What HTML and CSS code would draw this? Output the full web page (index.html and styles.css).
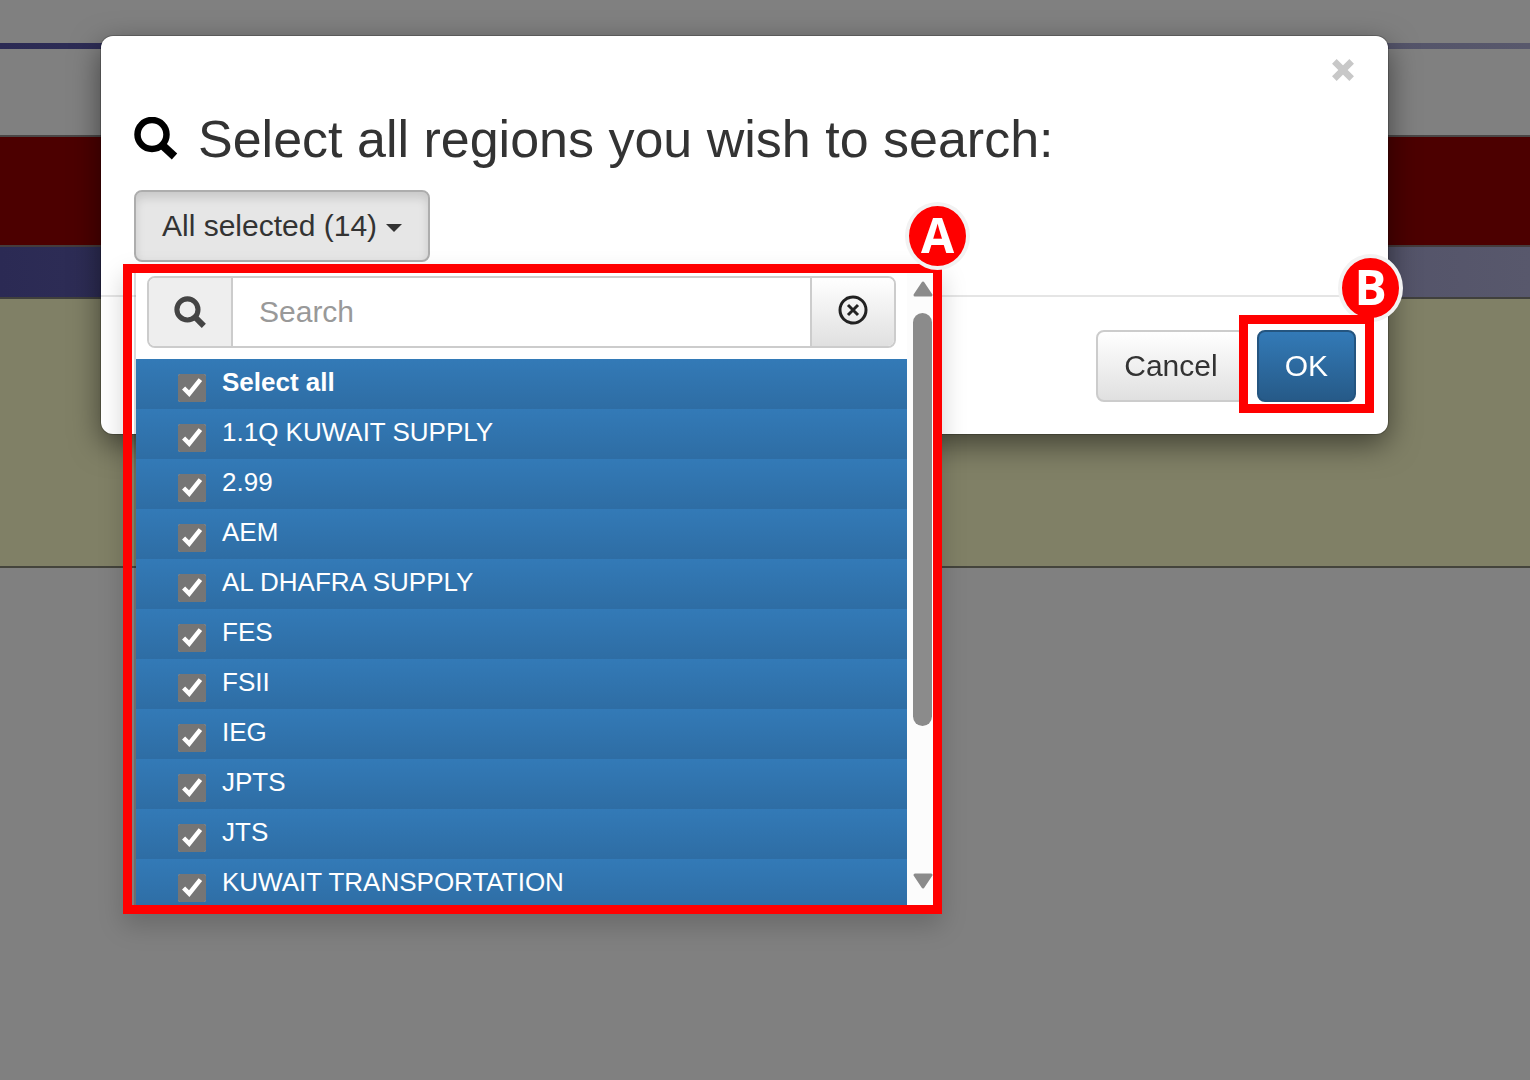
FILE: index.html
```html
<!DOCTYPE html>
<html lang="en">
<head>
    <meta charset="utf-8">
    <meta name="viewport" content="width=device-width, initial-scale=1">
    <title>Select regions</title>
    <link rel="stylesheet" href="styles.css">
</head>
<body>
    <div class="page">
        <div class="page-top"></div>
        <div class="page-line"></div>
        <div class="page-header"></div>
        <div class="page-banner"></div>
        <div class="page-nav"></div>
        <div class="page-notice"></div>
    </div>

    <div class="overlay">
        <div class="modal" role="dialog" aria-labelledby="modal-title">
            <div class="modal-header">
                <button class="close" type="button" aria-label="Close">
                    <svg class="close-icon" viewBox="0 0 24 24" aria-hidden="true">
                        <path d="M4 4l16 16M20 4L4 20" fill="none" stroke="#c8c8c8" stroke-width="6"/>
                    </svg>
                </button>
            </div>
            <div class="modal-body">
                <h1 class="modal-title" id="modal-title">
                    <svg class="title-icon" viewBox="0 0 44 44" aria-hidden="true">
                        <circle cx="18" cy="17.500" r="14.500" fill="none" stroke="#000" stroke-width="6.500"/>
                        <path d="M27.500 27.500l13 12" fill="none" stroke="#000" stroke-width="8"/>
                    </svg>
                    Select all regions you wish to search:
                </h1>
                <div class="btn-group">
                    <button class="btn btn-default btn-open" type="button" aria-expanded="true">All selected (14)<span class="caret"></span></button>
                    <div class="callout callout-menu">
                        <div class="menu">
                            <div class="menu-content">
                                <div class="search-box">
                                    <label class="search-addon" for="search" aria-label="Search">
                                        <svg class="search-icon" viewBox="0 0 44 44" aria-hidden="true">
                                            <circle cx="18.500" cy="18.500" r="14.500" fill="none" stroke="#444" stroke-width="7"/>
                                            <path d="M28 28l13 13" fill="none" stroke="#444" stroke-width="8"/>
                                        </svg>
                                    </label>
                                    <input class="search-input" id="search" type="text" placeholder="Search">
                                    <button class="search-clear" type="button" aria-label="Clear">
                                        <svg class="clear-icon" viewBox="0 0 30 30" aria-hidden="true">
                                            <circle cx="15" cy="15" r="13" fill="none" stroke="#222" stroke-width="3"/>
                                            <path d="M10 10l10 10M20 10L10 20" stroke="#222" stroke-width="3"/>
                                        </svg>
                                    </button>
                                </div>
                                <ul class="regions">
                                    <li><label class="region region-all"><input type="checkbox" checked>Select all</label></li>
                                    <li><label class="region"><input type="checkbox" checked>1.1Q KUWAIT SUPPLY</label></li>
                                    <li><label class="region"><input type="checkbox" checked>2.99</label></li>
                                    <li><label class="region"><input type="checkbox" checked>AEM</label></li>
                                    <li><label class="region"><input type="checkbox" checked>AL DHAFRA SUPPLY</label></li>
                                    <li><label class="region"><input type="checkbox" checked>FES</label></li>
                                    <li><label class="region"><input type="checkbox" checked>FSII</label></li>
                                    <li><label class="region"><input type="checkbox" checked>IEG</label></li>
                                    <li><label class="region"><input type="checkbox" checked>JPTS</label></li>
                                    <li><label class="region"><input type="checkbox" checked>JTS</label></li>
                                    <li><label class="region"><input type="checkbox" checked>KUWAIT TRANSPORTATION</label></li>
                                </ul>
                            </div>
                            <div class="scrollbar" aria-hidden="true">
                                <svg class="scroll-arrow" viewBox="0 0 20 16"><path d="M10 2L18 14H2z" fill="#8b8b8b" stroke="#8b8b8b" stroke-width="3" stroke-linejoin="round"/></svg>
                                <div class="scroll-track"><div class="scroll-thumb"></div></div>
                                <svg class="scroll-arrow" viewBox="0 0 20 16"><path d="M10 14L18 2H2z" fill="#8b8b8b" stroke="#8b8b8b" stroke-width="3" stroke-linejoin="round"/></svg>
                            </div>
                        </div>
                        <span class="marker marker-a">A</span>
                    </div>
                </div>
            </div>
            <div class="modal-footer">
                <button class="btn btn-default" type="button">Cancel</button>
                <div class="ok-wrap">
                    <button class="btn btn-primary" type="button">OK</button>
                    <span class="marker marker-b">B</span>
                    <span class="callout callout-ok"></span>
                </div>
            </div>
        </div>
    </div>
</body>
</html>
```

FILE: styles.css
```css
* {
    box-sizing: border-box;
}
body {
    margin: 0;
    min-height: 100vh;
    font-family: "Liberation Sans", Arial, sans-serif;
    font-size: 30px;
    color: #333;
    background-color: #808080;
    overflow: hidden;
}

/* dimmed page behind the dialog */
.page-top {
    height: 43px;
}
.page-line {
    height: 6px;
    background: linear-gradient(to right, #2b2a54, #58586c);
}
.page-header {
    height: 88px;
    border-bottom: 2px solid #4a4646;
}
.page-banner {
    height: 110px;
    background-color: #4c0000;
    border-bottom: 2px solid #453c3c;
}
.page-nav {
    height: 52px;
    background: linear-gradient(to right, #2b2a54, #58586c);
    border-bottom: 2px solid #40403c;
}
.page-notice {
    height: 269px;
    background-color: #808066;
    border-bottom: 2px solid #44443c;
}

/* dialog */
.overlay {
    position: fixed;
    inset: 0;
    padding: 36px 142px 0 101px;
}
.modal {
    background-color: #fff;
    border-radius: 12px;
    box-shadow: 0 0 0 1px rgba(0, 0, 0, 0.2), 0 10px 30px rgba(0, 0, 0, 0.5);
}
.modal-header {
    display: flex;
    justify-content: flex-end;
    padding: 12px 32px 0;
}
.close {
    display: flex;
    align-items: center;
    height: 44px;
    padding: 0;
    border: none;
    background: none;
    cursor: pointer;
}
.close-icon {
    width: 26px;
    height: 26px;
}
.modal-body {
    padding: 18px 32px 33px 33px;
}
.modal-title {
    display: flex;
    align-items: center;
    gap: 20px;
    margin: 0 0 22px;
    font-size: 52px;
    font-weight: normal;
    line-height: 58px;
}
.title-icon {
    width: 44px;
    height: 44px;
}
.modal-footer {
    display: flex;
    justify-content: flex-end;
    gap: 11px;
    padding: 33px 32px 32px;
    border-top: 2px solid #e5e5e5;
}

/* buttons */
.btn {
    display: block;
    height: 72px;
    padding: 0 26px;
    border: 2px solid #ccc;
    border-radius: 8px;
    font-family: inherit;
    font-size: 30px;
    color: #333;
    cursor: pointer;
}
.btn-default {
    background: linear-gradient(to bottom, #fff, #e0e0e0);
}
.btn-open {
    background: #e6e6e6;
    border-color: #adadad;
    box-shadow: inset 0 6px 10px rgba(0, 0, 0, 0.125);
}
.btn-primary {
    background: linear-gradient(to bottom, #337ab7, #265a88);
    border-color: #245580;
    color: #fff;
}
.caret {
    display: inline-block;
    margin-left: 9px;
    vertical-align: middle;
    border-top: 8px solid #333;
    border-left: 8px solid transparent;
    border-right: 8px solid transparent;
}
.btn-group,
.ok-wrap {
    position: relative;
    width: fit-content;
}

/* dropdown */
.menu {
    display: flex;
    max-height: 632px;
    overflow: hidden;
    border-left: 2px solid rgba(0, 0, 0, 0.15);
    background-color: #fff;
    background-clip: padding-box;
}
.menu-content {
    flex: 1;
}
.search-box {
    display: flex;
    height: 72px;
    margin: 3px 11px 11px;
    border: 2px solid #ccc;
    border-radius: 8px;
    overflow: hidden;
}
.search-addon,
.search-clear {
    display: flex;
    align-items: center;
    justify-content: center;
    width: 84px;
}
.search-addon {
    background-color: #eee;
    border-right: 2px solid #ccc;
}
.search-icon {
    width: 32px;
    height: 32px;
}
.search-input {
    flex: 1;
    min-width: 0;
    padding: 0 26px;
    border: none;
    font-family: inherit;
    font-size: 30px;
    color: #555;
}
.search-input::placeholder {
    color: #999;
}
.search-clear {
    padding: 0 0 4px;
    border: none;
    border-left: 2px solid #ccc;
    background: linear-gradient(to bottom, #fff, #e0e0e0);
    cursor: pointer;
}
.clear-icon {
    width: 30px;
    height: 30px;
}
.regions {
    margin: 0;
    padding: 0;
    list-style: none;
}
.region {
    display: flex;
    align-items: flex-start;
    gap: 16px;
    height: 50px;
    padding-left: 42px;
    background: linear-gradient(to bottom, #337ab7, #2e6da4);
    font-size: 26px;
    line-height: 46px;
    color: #fff;
    cursor: pointer;
}
.region-all {
    font-weight: bold;
}
.region input {
    width: 28px;
    height: 28px;
    margin: 15px 0 0;
    accent-color: #757575;
}
.scrollbar {
    display: flex;
    flex-direction: column;
    align-items: center;
    gap: 16px;
    width: 26px;
    padding: 8px 0 16px 5px;
    background-color: #fcfcfc;
}
.scroll-arrow {
    width: 20px;
    height: 16px;
}
.scroll-track {
    flex: 1;
}
.scroll-thumb {
    width: 19px;
    height: 76%;
    border-radius: 10px;
    background-color: #8b8b8b;
}

/* callouts */
.callout {
    position: absolute;
    border: 9px solid #f00;
}
.callout-menu {
    top: 74px;
    left: -11px;
    width: 819px;
    padding-left: 2px;
    box-shadow: 0 12px 24px rgba(0, 0, 0, 0.175);
}
.callout-ok {
    inset: -15px -18px -11px;
    pointer-events: none;
}
.marker {
    position: absolute;
    width: 65px;
    height: 68px;
    border: 4px solid #f2f2f2;
    border-radius: 50%;
    background-color: #f00;
    font-family: "Open Sans", "Noto Sans", sans-serif;
    font-size: 48px;
    font-weight: bold;
    line-height: 58px;
    text-align: center;
    color: #fff;
}
.marker-a {
    top: -71px;
    right: -37px;
}
.marker-b {
    top: -76px;
    right: -47px;
}
```
